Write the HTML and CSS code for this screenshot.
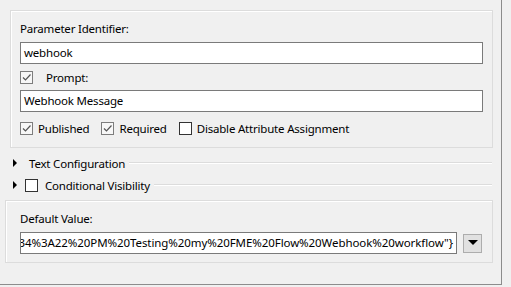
FILE: index.html
```html
<!DOCTYPE html>
<html lang="en">
<head>
    <meta charset="UTF-8">
    <title>Parameter Editor</title>
    <link rel="stylesheet" href="styles.css">
</head>
<body>
    <div class="panel">
        <div class="group first">
            <div class="label">Parameter Identifier:</div>
            <div class="field">webhook</div>
            <div class="row prompt">
                <span class="box checked"><svg width="11" height="11" viewBox="0 0 11 11"><path d="M2 5.5 L4.5 8 L9.5 2.5" fill="none" stroke="#555" stroke-width="1.2"/></svg></span>
                <span class="prompt-text">Prompt:</span>
            </div>
            <div class="field">Webhook Message</div>
            <div class="row flags">
                <span class="box checked"><svg width="11" height="11" viewBox="0 0 11 11"><path d="M2 5.5 L4.5 8 L9.5 2.5" fill="none" stroke="#555" stroke-width="1.2"/></svg></span>
                <span class="flag">Published</span>
                <span class="box checked"><svg width="11" height="11" viewBox="0 0 11 11"><path d="M2 5.5 L4.5 8 L9.5 2.5" fill="none" stroke="#555" stroke-width="1.2"/></svg></span>
                <span class="flag">Required</span>
                <span class="box"></span>
                <span class="flag">Disable Attribute Assignment</span>
            </div>
        </div>

        <div class="section">
            <span class="arrow"></span>
            <span class="section-title">Text Configuration</span>
            <span class="rule"></span>
        </div>
        <div class="section">
            <span class="arrow"></span>
            <span class="box"></span>
            <span class="section-title cond">Conditional Visibility</span>
            <span class="rule"></span>
        </div>

        <div class="group second">
            <div class="label">Default Value:</div>
            <div class="value-row">
                <div class="field long"><span>{"text":"Flow%20Event%20at%203%3A34%3A22%20PM%20Testing%20my%20FME%20Flow%20Webhook%20workflow"}</span></div>
                <div class="drop"><span class="down"></span></div>
            </div>
        </div>
    </div>
</body>
</html>
```

FILE: styles.css
```css
body {
    margin: 0;
    background: #f0f0f0;
    font-family: "Noto Sans", "Open Sans", sans-serif;
    font-size: 11.5px;
    letter-spacing: -0.2px;
    color: #000;
}

.panel {
    box-sizing: border-box;
    width: 502px;
    height: 285px;
    border-right: 1px solid #8c8c8c;
    border-bottom: 1px solid #8c8c8c;
    padding-top: 10px;
}

.group {
    box-sizing: border-box;
    border: 1px solid #dcdcdc;
    box-shadow: inset 1px 1px 0 #fff;
}

.group.first {
    margin-left: 10px;
    width: 483px;
    padding: 10px 9px 11px 9px;
}

.label {
    height: 16px;
    line-height: 16px;
}

.field {
    box-sizing: border-box;
    height: 22px;
    line-height: 19px;
    margin-top: 5px;
    padding: 0 3px;
    background: #fff;
    border: 1px solid #7a7a7a;
    white-space: nowrap;
    overflow: hidden;
}

.row {
    display: flex;
    align-items: center;
    height: 16px;
}

.prompt {
    margin-top: 5px;
    margin-bottom: 4px;
}

.prompt-text {
    margin-left: 13px;
}

.flags {
    margin-top: 8px;
}

.flag {
    margin-left: 5px;
    margin-right: 12px;
}

.box {
    box-sizing: border-box;
    width: 13px;
    height: 13px;
    border: 1px solid #333;
    background: #fff;
    display: flex;
    align-items: center;
    justify-content: center;
    flex-shrink: 0;
}

.box.checked {
    border-color: #7d7d7d;
    background: #f7f7f7;
}

.section {
    display: flex;
    align-items: center;
    height: 16px;
    margin-top: 6px;
    padding-left: 13px;
    width: 479px;
}

.group.first + .section {
    margin-top: 7px;
}

.arrow {
    width: 0;
    height: 0;
    border-left: 4px solid #000;
    border-top: 4px solid transparent;
    border-bottom: 4px solid transparent;
    margin-right: 8px;
}

.section-title {
    margin-left: 4px;
    white-space: nowrap;
}

.section-title.cond {
    margin-left: 7px;
}

.rule {
    flex: 1;
    height: 0;
    margin-left: 4px;
    border-top: 1px solid #dcdcdc;
    border-bottom: 1px solid #fff;
}

.group.second {
    margin-top: 7px;
    margin-left: 5px;
    width: 488px;
    padding: 10px 10px 8px 14px;
}

.value-row {
    display: flex;
    align-items: center;
    margin-top: 5px;
}

.field.long {
    margin-top: 0;
    width: 437px;
    display: flex;
    justify-content: flex-end;
    padding-right: 3px;
    letter-spacing: -0.08px;
}

.drop {
    box-sizing: border-box;
    width: 19px;
    height: 19px;
    margin-left: 6px;
    background: #e1e1e1;
    border: 1px solid #adadad;
    display: flex;
    align-items: center;
    justify-content: center;
}

.down {
    width: 0;
    height: 0;
    border-top: 5px solid #000;
    border-left: 5px solid transparent;
    border-right: 5px solid transparent;
    margin-top: -2px;
}
```
